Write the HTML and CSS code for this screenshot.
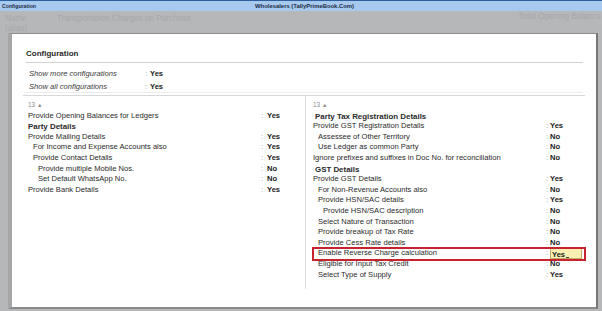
FILE: index.html
```html
<!DOCTYPE html>
<html lang="en">
<head>
    <meta charset="UTF-8">
    <title>Configuration - Ledger</title>
    <link rel="stylesheet" href="styles.css">
</head>
<body>
    <div class="titlebar">
        <span class="tb-left">Configuration</span>
        <span class="tb-center">Wholesalers (TallyPrimeBook.Com)</span>
    </div>

    <div class="ledger-head">
        <div class="lh-row">
            <span class="lh-name">Name</span>
            <span class="lh-value">Transportation Charges on Purchase</span>
            <span class="lh-total">Total Opening Balance</span>
        </div>
        <div class="lh-row">
            <span class="lh-name">(alias)</span>
        </div>
    </div>

    <div class="dialog">
        <div class="cfg-head">Configuration</div>

        <div class="show-list">
            <div class="show-row"><span class="show-label">Show more configurations</span><span class="colon">:</span><span class="val">Yes</span></div>
            <div class="show-row"><span class="show-label">Show all configurations</span><span class="colon">:</span><span class="val">Yes</span></div>
        </div>

        <div class="panels">
            <div class="panel panel-left">
                <div class="count">13 <span class="arrow">&#9650;</span></div>
                <div class="row"><span class="label">Provide Opening Balances for Ledgers</span><span class="colon">:</span><span class="val">Yes</span></div>
                <div class="row group">Party Details</div>
                <div class="row"><span class="label">Provide Mailing Details</span><span class="colon">:</span><span class="val">Yes</span></div>
                <div class="row l1"><span class="label">For Income and Expense Accounts also</span><span class="colon">:</span><span class="val">Yes</span></div>
                <div class="row l1"><span class="label">Provide Contact Details</span><span class="colon">:</span><span class="val">Yes</span></div>
                <div class="row l2"><span class="label">Provide multiple Mobile Nos.</span><span class="colon">:</span><span class="val">No</span></div>
                <div class="row l2"><span class="label">Set Default WhatsApp No.</span><span class="colon">:</span><span class="val">No</span></div>
                <div class="row"><span class="label">Provide Bank Details</span><span class="colon">:</span><span class="val">Yes</span></div>
            </div>

            <div class="panel panel-right">
                <div class="count">13 <span class="arrow">&#9650;</span></div>
                <div class="row group">Party Tax Registration Details</div>
                <div class="row"><span class="label">Provide GST Registration Details</span><span class="colon">:</span><span class="val">Yes</span></div>
                <div class="row l1"><span class="label">Assessee of Other Territory</span><span class="colon">:</span><span class="val">No</span></div>
                <div class="row l1"><span class="label">Use Ledger as common Party</span><span class="colon">:</span><span class="val">No</span></div>
                <div class="row"><span class="label">Ignore prefixes and suffixes in Doc No. for reconciliation</span><span class="colon">:</span><span class="val">No</span></div>
                <div class="row group">GST Details</div>
                <div class="row"><span class="label">Provide GST Details</span><span class="colon">:</span><span class="val">Yes</span></div>
                <div class="row l1"><span class="label">For Non-Revenue Accounts also</span><span class="colon">:</span><span class="val">No</span></div>
                <div class="row l1"><span class="label">Provide HSN/SAC details</span><span class="colon">:</span><span class="val">Yes</span></div>
                <div class="row l2"><span class="label">Provide HSN/SAC description</span><span class="colon">:</span><span class="val">No</span></div>
                <div class="row l1"><span class="label">Select Nature of Transaction</span><span class="colon">:</span><span class="val">No</span></div>
                <div class="row l1"><span class="label">Provide breakup of Tax Rate</span><span class="colon">:</span><span class="val">No</span></div>
                <div class="row l1"><span class="label">Provide Cess Rate details</span><span class="colon">:</span><span class="val">No</span></div>
                <div class="row l1 selected"><span class="label">Enable Reverse Charge calculation</span><span class="colon">:</span><span class="val"><span class="field">Yes<span class="cursor"></span></span></span></div>
                <div class="row l1"><span class="label">Eligible for Input Tax Credit</span><span class="colon">:</span><span class="val">No</span></div>
                <div class="row l1"><span class="label">Select Type of Supply</span><span class="colon">:</span><span class="val">Yes</span></div>
            </div>
        </div>
    </div>
</body>
</html>
```

FILE: styles.css
```css
body {
    margin: 0;
    width: 602px;
    height: 311px;
    overflow: hidden;
    background-color: #b6b7b9;
    font-family: "Liberation Sans", Arial, sans-serif;
    color: #2a2a2a;
}

/* top title bar */
.titlebar {
    height: 10px;
    border-top: 1px solid #2d5f9f;
    background-color: #a7c9ee;
    display: flex;
    align-items: center;
    font-weight: bold;
    color: #1b2c44;
}
.tb-left {
    width: 255px;
    padding-left: 2px;
    box-sizing: border-box;
    font-size: 5.2px;
}
.tb-center {
    font-size: 5.9px;
}

/* faded ledger screen behind the dialog */
.ledger-head {
    height: 22px;
    padding-top: 1px;
    box-sizing: border-box;
    color: #a6a8ab;
    font-size: 8.2px;
}
.lh-row {
    display: flex;
    align-items: flex-start;
    height: 10px;
    line-height: 10px;
}
.lh-name {
    width: 52px;
    padding-left: 5px;
    padding-top: 2px;
}
.lh-value {
    padding-top: 2px;
}
.lh-total {
    margin-left: auto;
    margin-right: 1px;
    font-size: 8.2px;
}

/* configuration dialog */
.dialog {
    margin-left: 8px;
    width: 590px;
    height: 276px;
    box-sizing: border-box;
    background-color: #fff;
    border-left: 4px solid #a5a6a8;
    border-top: 1px solid #8e8e8e;
    border-right: 2px solid #777;
    border-bottom: 2px solid #8a8a8a;
}
.cfg-head {
    margin: 0 13px 0 14px;
    padding: 15px 0 3px;
    font-size: 8px;
    font-weight: bold;
    line-height: 10px;
    border-bottom: 1px solid #d2d2d2;
}
.show-list {
    margin: 0 13px 0 14px;
    padding-top: 6px;
    border-bottom: 1px solid #ececec;
}
.show-row {
    display: flex;
    height: 10px;
    line-height: 10px;
    margin-bottom: 3px;
    font-size: 7.6px;
}
.show-row:last-child {
    margin-bottom: 0;
}
.show-label {
    width: 116px;
    padding-left: 3px;
    font-style: italic;
    color: #3a3a3a;
}
.show-row .colon {
    width: 5px;
}

/* two column panels */
.panels {
    margin: 2px 11px 0 11px;
    height: 193px;
    display: grid;
    grid-template-columns: 282px 1fr;
    border-top: 1px solid #d8d8d8;
}
.panel {
    padding-top: 4px;
    font-size: 7.6px;
}
.panel-left {
    padding-left: 5px;
}
.panel-right {
    padding-left: 7px;
    border-left: 1px solid #dcdcdc;
}
.count {
    height: 10.6px;
    line-height: 10.6px;
    font-size: 6.4px;
    color: #8d8d8d;
}
.arrow {
    font-size: 5.5px;
    vertical-align: 0;
}
.row {
    position: relative;
    display: flex;
    height: 10.6px;
    line-height: 10.6px;
}
.row.group {
    font-weight: bold;
    font-size: 7.9px;
    line-height: 12px;
}
.panel-right .row.group {
    padding-left: 2px;
}
.row.l1 .label {
    padding-left: 5px;
}
.row.l2 .label {
    padding-left: 10px;
}
.label {
    flex: 1;
    white-space: nowrap;
}
.colon {
    color: #a0a0a0;
}
.val {
    font-weight: bold;
    color: #222;
}
.panel-left .colon {
    width: 6px;
}
.panel-left .val {
    width: 38px;
}
.panel-right .colon {
    width: 4px;
}
.panel-right .val {
    width: 35px;
}

/* highlighted row */
.row.selected::after {
    content: "";
    position: absolute;
    left: -1px;
    right: -1px;
    top: -1px;
    bottom: -2px;
    border: 2px solid #c6232f;
}
.field {
    display: inline-block;
    width: 32px;
    height: 11px;
    line-height: 11px;
    box-sizing: border-box;
    padding-left: 1px;
    background-color: #fcefb2;
    border: 1px solid #c2ab6a;
}
.cursor {
    display: inline-block;
    width: 3px;
    height: 1px;
    margin-left: 1px;
    background-color: #444;
    vertical-align: -1px;
}
```
